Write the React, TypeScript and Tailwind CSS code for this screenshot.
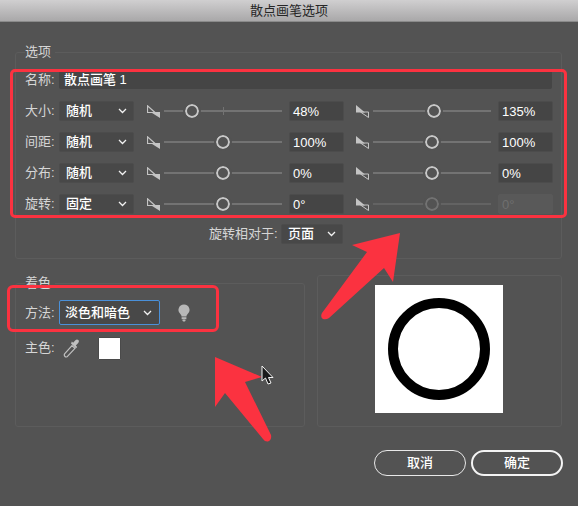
import React from "react";

const font = { fontFamily: '"Liberation Sans","Noto Sans CJK SC",sans-serif' };

function Chevron() {
  return (
    <svg width="9" height="6" viewBox="0 0 9 6" className="shrink-0">
      <path d="M1 1l3.5 3.5L8 1" fill="none" stroke="#f2f2f2" strokeWidth="1.3" />
    </svg>
  );
}

function Select({ value, className }: { value: string; className: string }) {
  return (
    <div className={`flex h-5 items-center justify-between rounded-[2px] border border-[#4c4c4c] bg-[#484848] pl-[6px] pr-[6px] text-[13px] font-medium text-white ${className}`}>
      <span>{value}</span>
      <Chevron />
    </div>
  );
}

function Taper({ flip }: { flip?: boolean }) {
  return (
    <svg width="13" height="13" viewBox="0 0 13 13" className="shrink-0">
      {flip ? (
        <>
          <path d="M0 0L9 7.500H0Z" fill="#c4c4c4" />
          <path d="M4.500 7L12.500 7V12.500Z" fill="none" stroke="#c4c4c4" strokeWidth="1" />
        </>
      ) : (
        <>
          <path d="M.5 .8V7.500H8Z" fill="none" stroke="#c4c4c4" strokeWidth="1.200" />
          <path d="M3.500 7H13V13Z" fill="#c4c4c4" />
        </>
      )}
    </svg>
  );
}

function Slider({ pos, tick, dim, flip }: { pos: number; tick?: boolean; dim?: boolean; flip?: boolean }) {
  return (
    <div className="flex w-[135px] shrink-0 items-center gap-1">
      <Taper flip={flip} />
      <div className={`relative h-[2px] flex-1 ${dim ? "bg-[#636363]" : "bg-[#737373]"}`}>
        {tick ? <div className="absolute left-[59px] top-[-3px] h-2 w-px bg-[#737373]" /> : null}
        <div
          className={`absolute top-[-6px] h-[14px] w-[14px] rounded-full border-[2.5px] bg-[#535353] outline-2 outline-[#535353] ${dim ? "border-[#727272]" : "border-[#c8c8c8]"}`}
          style={{ left: pos }}
        />
      </div>
    </div>
  );
}

function Field({ value, dim }: { value: string; dim?: boolean }) {
  return (
    <div
      className={`flex h-5 w-[55px] shrink-0 items-center rounded-[2px] border px-[3px] pt-px text-[13px] ${
        dim ? "border-[#595959] bg-[#595959] text-[#6f6f6f]" : "border-[#4c4c4c] bg-[#454545] text-white"
      }`}
    >
      {value}
    </div>
  );
}

function Row({
  label,
  mode,
  a,
  b,
  tick,
  dim,
}: {
  label: string;
  mode: string;
  a: { pos: number; value: string };
  b: { pos: number; value: string };
  tick?: boolean;
  dim?: boolean;
}) {
  return (
    <div className="flex h-5 items-center">
      <span className="w-[34px] shrink-0 text-[13px] text-[#d6d6d6]">{label}</span>
      <Select value={mode} className="w-[75px] shrink-0" />
      <div className="ml-[13px]">
        <Slider pos={a.pos} tick={tick} />
      </div>
      <div className="ml-[7px]">
        <Field value={a.value} />
      </div>
      <div className="ml-[12px]">
        <Slider pos={b.pos} dim={dim} flip />
      </div>
      <div className="ml-[7px]">
        <Field value={b.value} dim={dim} />
      </div>
    </div>
  );
}

function Btn({ label, strong }: { label: string; strong?: boolean }) {
  return (
    <div
      className={`flex h-[26px] w-[92px] items-center justify-center rounded-full text-[13px] font-medium text-white ${
        strong ? "border-2 border-[#f4f4f4]" : "border border-[#e8e8e8]"
      }`}
    >
      {label}
    </div>
  );
}

export default function App() {
  return (
    <div style={font} className="relative h-[506px] w-[578px] overflow-hidden bg-[#535353]">
      <div className="flex h-[22px] items-center justify-center border-b border-[#8a8a8a] bg-gradient-to-b from-[#d0cfd0] to-[#a9a8a9] text-[13px] text-[#262626]">
        散点画笔选项
      </div>

      <div className="px-[15px] pt-[30px]">
        <div className="relative h-[207px] w-[547px] rounded-[3px] border border-[#5c5c5c] pl-[9px] pt-[18px]">
          <span className="absolute left-[9px] top-[-8px] bg-[#535353] pr-1 text-[13px] leading-[14px] text-[#d6d6d6]">选项</span>
          <div className="flex h-[18px] items-center">
            <span className="w-[34px] shrink-0 text-[13px] text-[#d6d6d6]">名称:</span>
            <div className="flex h-[18px] w-[493px] items-center rounded-[2px] bg-[#454545] px-[5px] text-[13px] font-medium text-white">散点画笔 1</div>
          </div>
          <div className="mt-[12px] flex flex-col gap-[11px]">
            <Row label="大小:" mode="随机" a={{ pos: 21, value: "48%" }} b={{ pos: 54, value: "135%" }} tick />
            <Row label="间距:" mode="随机" a={{ pos: 52, value: "100%" }} b={{ pos: 52, value: "100%" }} />
            <Row label="分布:" mode="随机" a={{ pos: 52, value: "0%" }} b={{ pos: 52, value: "0%" }} />
            <Row label="旋转:" mode="固定" a={{ pos: 52, value: "0°" }} b={{ pos: 52, value: "0°" }} dim />
          </div>
          <div className="mt-[10px] ml-[184px] flex items-center">
            <span className="w-[72px] shrink-0 text-[13px] text-[#d6d6d6]">旋转相对于:</span>
            <Select value="页面" className="w-[62px] shrink-0" />
          </div>
        </div>

        <div className="mt-[16px] flex gap-[12px]">
          <div className="relative mt-[8px] h-[144px] w-[290px] rounded-[3px] border border-[#5c5c5c] pl-[9px]">
            <span className="absolute left-[9px] top-[-8px] bg-[#535353] pr-1 text-[13px] leading-[14px] text-[#d6d6d6]">着色</span>
            <div className="mt-[16px] flex h-[25px] items-center">
              <span className="w-[34px] shrink-0 text-[13px] text-[#d6d6d6]">方法:</span>
              <div className="flex h-[25px] w-[101px] items-center justify-between rounded-[2px] border border-[#4a90d9] bg-[#484848] pl-[5px] pr-[7px] text-[13px] font-medium text-white">
                <span>淡色和暗色</span>
                <Chevron />
              </div>
              <svg width="12" height="18" viewBox="0 0 12 18" className="ml-[18px]">
                <path d="M6 .5a5.5 5.5 0 0 0-3.3 9.9c.7.6.8 1.6.8 2.1h5c0-.5.1-1.5.8-2.1A5.5 5.5 0 0 0 6 .5Z" fill="#b8b8b8" />
                <rect x="3.600" y="13.200" width="4.800" height="2" fill="#b8b8b8" />
                <rect x="4.400" y="15.600" width="3.200" height="1.800" rx=".8" fill="#b8b8b8" />
              </svg>
            </div>
            <div className="mt-[11px] flex h-[24px] items-center">
              <span className="w-[38px] shrink-0 text-[13px] text-[#d6d6d6]">主色:</span>
              <svg width="18" height="21" viewBox="0 0 18 21" className="shrink-0">
                <path d="M2 18.500c-1-1-.8-2-.2-2.800l7.200-8 3 2.700-7.300 7.800c-.7.800-1.800 1.200-2.700.3Z" fill="none" stroke="#c0c0c0" strokeWidth="1.200" />
                <path d="M8 5.600l5 4.600 1.200-1.300-1.400-1.300 2.400-2.600c1-1.200.9-2.300.1-3s-2-.7-2.900.3l-2.300 2.400-1.200-1.100L8 5.600Z" fill="#c0c0c0" />
              </svg>
              <div className="ml-[17px] h-[23px] w-[23px] shrink-0 rounded-[1px] border border-[#4a4a4a] bg-white" />
            </div>
          </div>

          <div className="flex h-[152px] w-[245px] justify-start rounded-[3px] border border-[#5c5c5c] pl-[57px] pt-[9px]">
            <div className="flex h-[128px] w-[128px] items-center justify-center bg-white">
              <div className="h-[102px] w-[102px] rounded-full border-[10px] border-black bg-white" />
            </div>
          </div>
        </div>

        <div className="mt-[23px] flex justify-end gap-[5px]">
          <Btn label="取消" />
          <Btn label="确定" strong />
        </div>
      </div>

      {/* annotations drawn over the dialog */}
      <div className="pointer-events-none absolute left-[10px] top-[69px] h-[149px] w-[557px] rounded-[5px] border-[3px] border-[#fb3240]" />
      <div className="pointer-events-none absolute left-[7px] top-[285px] h-[47px] w-[212px] rounded-[6px] border-[3px] border-[#fb3240]" />
      <svg width="578" height="506" viewBox="0 0 578 506" className="pointer-events-none absolute left-0 top-0">
        <path
          d="M400 233L352 245L367 252L322 313Q320 317 323 319Q326 320 329 318L384 268L393 282Z"
          fill="#fb3240"
        />
        <path
          d="M215 357L262 377L245 382L271 435Q272 440 268 441.500Q265 442 263 439L225 393L215 407Z"
          fill="#fb3240"
        />
        <path
          d="M262 366V381L265.500 378L268 384L271 383L268.500 377.500H273Z"
          fill="#1a1a1a"
          stroke="#f4f4f4"
          strokeWidth="1"
        />
      </svg>
    </div>
  );
}
